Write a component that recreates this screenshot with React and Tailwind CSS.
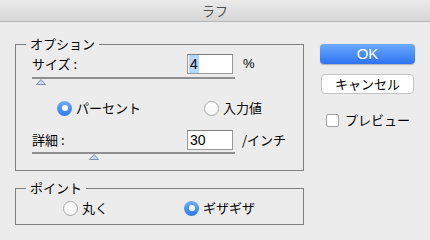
import React from "react";

const jp = "font-['Noto_Sans_CJK_JP','Noto_Sans',sans-serif]";

function Radio({ on }) {
  if (on) {
    return (
      <span className="flex h-[15px] w-[15px] shrink-0 items-center justify-center rounded-full bg-gradient-to-b from-[#6eaefa] to-[#2f78f4]">
        <span className="h-[6px] w-[6px] rounded-full bg-white" />
      </span>
    );
  }
  return (
    <span className="h-[15px] w-[15px] shrink-0 rounded-full border border-[#a9a9a9] bg-gradient-to-b from-white to-[#f6f6f6]" />
  );
}

function Thumb({ className }) {
  return (
    <svg width="10" height="6" viewBox="0 0 10 6" className={className}>
      <polygon points="5,0.5 9.5,5.5 0.5,5.5" fill="#c8d7ec" stroke="#8193ac" strokeWidth="1" />
    </svg>
  );
}

export default function App() {
  return (
    <div className={`${jp} h-[240px] w-[430px] overflow-hidden bg-[#ececec] text-[13px] text-black`}>
      <div className="flex h-[22px] items-center justify-center border-b border-[#b4b4b4] bg-gradient-to-b from-[#ebebeb] to-[#d6d6d6] text-[13px] text-[#4d4d4d]">
        ラフ
      </div>
      <div className="flex pt-[14px]">
        <div className="ml-[15px] flex w-[289px] flex-col">
          <fieldset className="border border-[#808080] p-0">
            <legend className="ml-[10px] px-[4px] text-[13px] leading-[16px]">オプション</legend>
            <div className="px-[16px] pb-[10px]">
              <div className="mt-[2px] flex h-[20px] items-center">
                <span className="w-[155px] leading-[16px]">サイズ :</span>
                <div className="flex h-[20px] w-[46px] items-center border border-[#9a9a9a] border-t-[#7d7d7d] bg-white pl-[1px]">
                  <span className="bg-[#b4d5fe] px-[1px] font-['Liberation_Sans',sans-serif] text-[14px] leading-[18px]">4</span>
                </div>
                <span className="ml-[10px] font-['Liberation_Sans',sans-serif] text-[13px]">%</span>
              </div>
              <div className="mt-[3px] h-[2px] w-[203px] bg-[#8f8f8f]" />
              <Thumb className="ml-[4px] block" />
              <div className="mt-[15px] flex h-[16px] items-center">
                <div className="ml-[25px] flex w-[147px] items-center gap-[4px]">
                  <Radio on />
                  <span className="leading-[16px]">パーセント</span>
                </div>
                <div className="flex items-center gap-[4px]">
                  <Radio />
                  <span className="leading-[16px]">入力値</span>
                </div>
              </div>
              <div className="mt-[14px] flex h-[20px] items-center">
                <span className="w-[155px] leading-[16px]">詳細 :</span>
                <div className="flex h-[20px] w-[46px] items-center border border-[#9a9a9a] border-t-[#7d7d7d] bg-white pl-[2px]">
                  <span className="font-['Liberation_Sans',sans-serif] text-[14px] leading-[18px]">30</span>
                </div>
                <span className="ml-[9px] leading-[16px]">/インチ</span>
              </div>
              <div className="mt-[2px] h-[2px] w-[203px] bg-[#8f8f8f]" />
              <Thumb className="ml-[57px] block" />
            </div>
          </fieldset>
          <fieldset className="mt-[9px] border border-[#808080] p-0">
            <legend className="ml-[10px] px-[4px] text-[13px] leading-[16px]">ポイント</legend>
            <div className="px-[16px] pb-[8px]">
              <div className="mt-[4px] flex h-[16px] items-center">
                <div className="ml-[31px] flex w-[121px] items-center gap-[4px]">
                  <Radio />
                  <span className="leading-[16px]">丸く</span>
                </div>
                <div className="flex items-center gap-[4px]">
                  <Radio on />
                  <span className="leading-[16px]">ギザギザ</span>
                </div>
              </div>
            </div>
          </fieldset>
        </div>
        <div className="ml-[16px] flex flex-col pt-[8px]">
          <div className="flex h-[20px] w-[95px] items-center justify-center rounded-[4px] bg-gradient-to-b from-[#6aaafa] to-[#2f72f3] font-['Liberation_Sans',sans-serif] text-[15px] text-white shadow-[0_0.5px_1px_rgba(0,0,0,0.25)]">
            OK
          </div>
          <div className="ml-[1px] mt-[10px] flex h-[20px] w-[93px] items-center justify-center rounded-[4px] border border-[#c4c4c4] bg-white text-[13px] leading-[16px]">
            キャンセル
          </div>
          <div className="ml-[6px] mt-[18px] flex items-center">
            <span className="h-[13px] w-[13px] rounded-[2px] border border-[#a3a3a3] bg-white" />
            <span className="ml-[6px] leading-[16px]">プレビュー</span>
          </div>
        </div>
      </div>
    </div>
  );
}
